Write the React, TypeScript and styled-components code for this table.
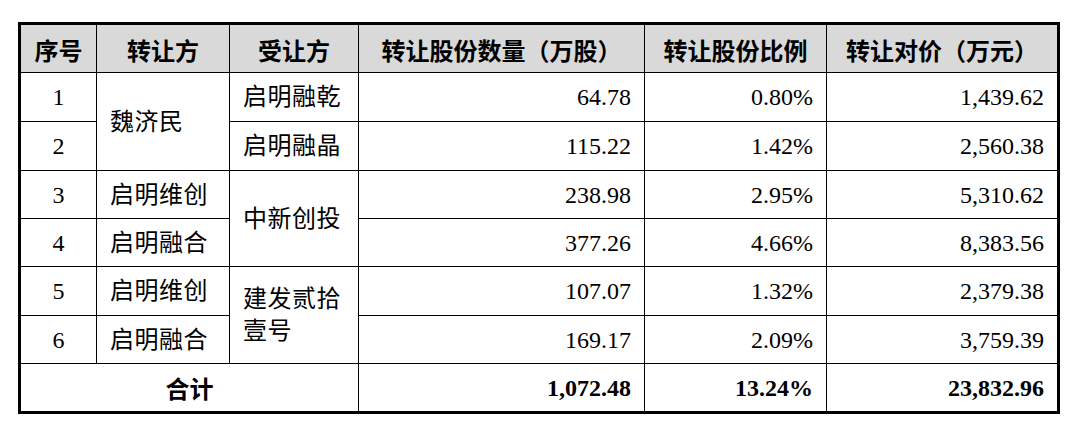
import React from 'react';
import styled, { createGlobalStyle } from 'styled-components';

const GlobalStyle = createGlobalStyle`
  html, body {
    margin: 0;
    padding: 0;
    background: #ffffff;
  }
  body {
    font-family: "Liberation Serif", "Noto Sans CJK SC", serif;
    color: #000;
  }
`;

const Page = styled.div`
  padding: 22px 0 0 18px;
`;

const Grid = styled.div`
  display: grid;
  grid-template-columns: 75px 132px 128px 285px 181px 230px;
  grid-template-rows: 47px 48px 48px 47px 47px 48px 47px 47px;
  gap: 1px;
  width: max-content;
  background: #000;
  border: 3px solid #000;
`;

type Align = 'left' | 'center' | 'right';

const Cell = styled.div<{ $align?: Align; $rows?: number; $cols?: number }>`
  display: flex;
  align-items: center;
  justify-content: ${p => (p.$align === 'left' ? 'flex-start' : p.$align === 'right' ? 'flex-end' : 'center')};
  text-align: ${p => p.$align || 'center'};
  padding: ${p => (p.$align === 'right' ? '0 13px 0 0' : p.$align === 'left' ? '0 10px 0 13px' : '0')};
  background: #fff;
  font-size: 24px;
  line-height: 32px;
  letter-spacing: 0.5px;
  grid-row: ${p => (p.$rows ? `span ${p.$rows}` : 'auto')};
  grid-column: ${p => (p.$cols ? `span ${p.$cols}` : 'auto')};
`;

const Head = styled(Cell)`
  background: #d9d9d9;
  font-family: "Noto Sans CJK SC", sans-serif;
  font-weight: 700;
  letter-spacing: 0;
  padding-top: 3px;
`;

const TotalLabel = styled(Cell)`
  font-family: "Noto Sans CJK SC", sans-serif;
  font-weight: 700;
  letter-spacing: 0;
`;

const TotalNum = styled(Cell)`
  font-weight: 700;
  letter-spacing: 0;
`;

const Num = styled(Cell)`
  letter-spacing: 0;
`;

const headers = ['序号', '转让方', '受让方', '转让股份数量（万股）', '转让股份比例', '转让对价（万元）'];

type Row = {
  no: string;
  from?: string;
  fromSpan?: number;
  to?: string;
  toSpan?: number;
  shares: string;
  ratio: string;
  price: string;
};

const rows: Row[] = [
  { no: '1', from: '魏济民', fromSpan: 2, to: '启明融乾', shares: '64.78', ratio: '0.80%', price: '1,439.62' },
  { no: '2', to: '启明融晶', shares: '115.22', ratio: '1.42%', price: '2,560.38' },
  { no: '3', from: '启明维创', to: '中新创投', toSpan: 2, shares: '238.98', ratio: '2.95%', price: '5,310.62' },
  { no: '4', from: '启明融合', shares: '377.26', ratio: '4.66%', price: '8,383.56' },
  { no: '5', from: '启明维创', to: '建发贰拾壹号', toSpan: 2, shares: '107.07', ratio: '1.32%', price: '2,379.38' },
  { no: '6', from: '启明融合', shares: '169.17', ratio: '2.09%', price: '3,759.39' },
];

export default function App() {
  return (
    <Page>
      <GlobalStyle />
      <Grid>
        {headers.map(h => (
          <Head key={h}>{h}</Head>
        ))}
        {rows.map(r => (
          <React.Fragment key={r.no}>
            <Num>{r.no}</Num>
            {r.from && (
              <Cell $align="left" $rows={r.fromSpan}>
                {r.from}
              </Cell>
            )}
            {r.to && (
              <Cell $align="left" $rows={r.toSpan}>
                {r.to}
              </Cell>
            )}
            <Num $align="right">{r.shares}</Num>
            <Num $align="right">{r.ratio}</Num>
            <Num $align="right">{r.price}</Num>
          </React.Fragment>
        ))}
        <TotalLabel $cols={3}>合计</TotalLabel>
        <TotalNum $align="right">1,072.48</TotalNum>
        <TotalNum $align="right">13.24%</TotalNum>
        <TotalNum $align="right">23,832.96</TotalNum>
      </Grid>
    </Page>
  );
}
